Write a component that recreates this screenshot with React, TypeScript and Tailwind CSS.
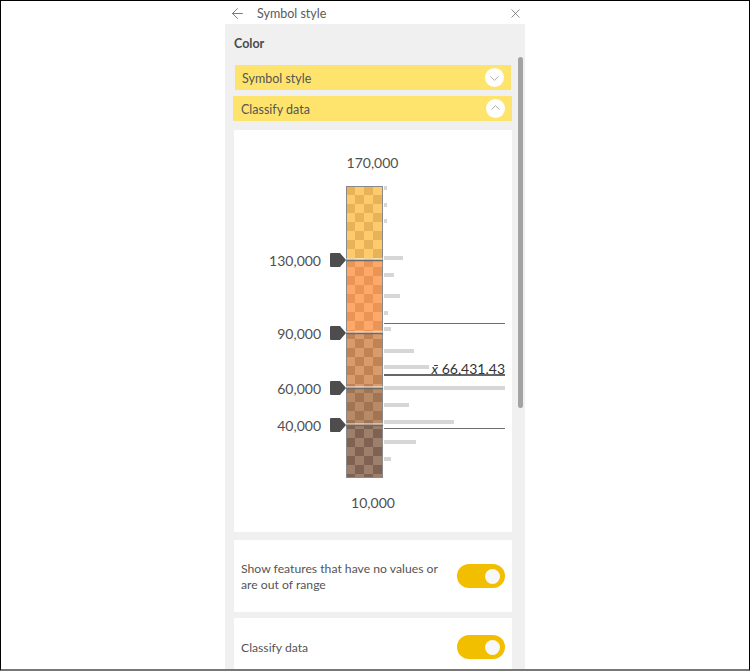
import { ArrowLeft, X, ChevronDown, ChevronUp } from "lucide-react";

const font = { fontFamily: "Lato, 'Liberation Sans', sans-serif" };

const segments = [
  { y0: 56, y1: 130, light: "#fdca6c", dark: "#e8b358", id: "s1" },
  { y0: 130, y1: 203, light: "#fea86a", dark: "#ea9556", id: "s2" },
  { y0: 203, y1: 258, light: "#d99b6c", dark: "#c28254", id: "s3" },
  { y0: 258, y1: 295, light: "#b88b66", dark: "#a17453", id: "s4" },
  { y0: 295, y1: 348, light: "#9d7f6c", dark: "#806252", id: "s5" },
];

const breaks = [
  { y: 130, label: "130,000" },
  { y: 203, label: "90,000" },
  { y: 258, label: "60,000" },
  { y: 295, label: "40,000" },
];

const hist: [number, number][] = [
  [58, 3], [75, 3], [91, 3], [128, 19], [145, 10], [166, 16], [183, 4],
  [199, 7], [221, 30], [237, 45], [258, 121], [275, 25], [292, 70],
  [312, 32], [329, 7],
];

function Chart() {
  return (
    <svg width="278" height="402" style={font}>
      <defs>
        {segments.map((s) => (
          <pattern key={s.id} id={s.id} x="112" y="56" width="18" height="18" patternUnits="userSpaceOnUse">
            <rect width="18" height="18" fill={s.light} />
            <rect width="9" height="9" fill={s.dark} />
            <rect x="9" y="9" width="9" height="9" fill={s.dark} />
          </pattern>
        ))}
      </defs>
      <text x="138.5" y="32" textAnchor="middle" dominantBaseline="central" fontSize="14" fill="#505050">170,000</text>
      <text x="139" y="372" textAnchor="middle" dominantBaseline="central" fontSize="14" fill="#505050">10,000</text>

      {hist.map(([y, w], i) => (
        <rect key={i} x="150" y={y - 2} width={w} height="4" fill="#d6d6d6" />
      ))}

      {segments.map((s) => (
        <rect key={s.id} x="112" y={s.y0} width="37" height={s.y1 - s.y0} fill={`url(#${s.id})`} />
      ))}
      <rect x="112.5" y="56.5" width="36" height="291" fill="none" stroke="#8a8a8a" strokeWidth="1" />

      <line x1="150" y1="193.5" x2="271" y2="193.5" stroke="#6e6e6e" strokeWidth="1" />
      <line x1="150" y1="245" x2="271" y2="245" stroke="#333" strokeWidth="1.5" />
      <line x1="150" y1="298.5" x2="271" y2="298.5" stroke="#6e6e6e" strokeWidth="1" />
      <text x="271" y="238" textAnchor="end" dominantBaseline="central" fontSize="14" fill="#333">
        <tspan fontStyle="italic">x̄</tspan> 66,431.43
      </text>

      {breaks.map((b) => (
        <g key={b.label}>
          <line x1="112" y1={b.y - 1} x2="149" y2={b.y - 1} stroke="#f4f4f4" strokeWidth="1" />
          <line x1="112" y1={b.y + 0.5} x2="149" y2={b.y + 0.5} stroke="#6b6b6b" strokeWidth="1.5" />
          <path d={`M97 ${b.y - 7} H106 L112 ${b.y} L106 ${b.y + 7} H97 Q96 ${b.y + 7} 96 ${b.y + 6} V${b.y - 6} Q96 ${b.y - 7} 97 ${b.y - 7} Z`} fill="#4d4d4d" />
          <text x="87" y={b.y} textAnchor="end" dominantBaseline="central" fontSize="14" fill="#505050">{b.label}</text>
        </g>
      ))}
    </svg>
  );
}

function Toggle() {
  return (
    <div className="w-[48px] h-[24px] rounded-full bg-[#f1bf00] flex items-center justify-end pr-[5px] shrink-0">
      <div className="w-[15px] h-[15px] rounded-full bg-[#f7f7f7]" />
    </div>
  );
}

export default function App() {
  return (
    <div className="w-[750px] h-[671px] bg-white border-x border-t border-black border-b-2 border-b-[#777] flex justify-center overflow-hidden" style={font}>
      <div className="w-[300px] h-full flex flex-col">
        <div className="h-[23px] bg-white flex items-center relative text-[#5a5a5a] shrink-0">
          <ArrowLeft size={17} strokeWidth={1.1} className="ml-[4px] mt-[2px]" />
          <span className="ml-[11px] text-[12.5px] mt-[3px]">Symbol style</span>
          <X size={15} strokeWidth={1.1} className="ml-auto mr-[2px] mt-[2px]" />
        </div>
        <div className="flex-1 bg-[#f0f0f0] relative overflow-hidden">
          <div className="w-[278px] ml-[9px] flex flex-col">
            <div className="pt-[12px] text-[12.5px] leading-[16px] font-bold text-[#4a4a4a]">Color</div>
            <div className="mt-[13px] mx-[1px] h-[25px] bg-[#fee46c] flex items-center justify-between pl-[7px] pr-[7px] text-[12.5px] text-[#555]">
              <span className="mt-[3px]">Symbol style</span>
              <span className="w-[19px] h-[19px] rounded-full bg-white flex items-center justify-center">
                <ChevronDown size={15} strokeWidth={1.1} color="#888" className="mt-[1px]" />
              </span>
            </div>
            <div className="mt-[6px] -ml-[1px] h-[25px] bg-[#fee46c] flex items-center justify-between pl-[8px] pr-[7px] text-[12.5px] text-[#555]">
              <span className="mt-[3px]">Classify data</span>
              <span className="w-[19px] h-[19px] rounded-full bg-white flex items-center justify-center">
                <ChevronUp size={15} strokeWidth={1.1} color="#888" className="-mt-[2px]" />
              </span>
            </div>
            <div className="mt-[9px] h-[402px] bg-white">
              <Chart />
            </div>
            <div className="mt-[8px] h-[72px] bg-white flex items-center justify-between pl-[7px] pr-[7px]">
              <span className="w-[205px] text-[12.2px] leading-[16px] text-[#555] mt-[2px]">
                Show features that have no values or are out of range
              </span>
              <Toggle />
            </div>
            <div className="mt-[6px] h-[58px] bg-white flex items-center justify-between pl-[7px] pr-[7px]">
              <span className="text-[12.2px] text-[#555] mt-[2px]">Classify data</span>
              <Toggle />
            </div>
          </div>
          <div className="absolute right-[2px] top-[33px] w-[5px] h-[351px] rounded-full bg-[#a3a3a3]" />
        </div>
      </div>
    </div>
  );
}
